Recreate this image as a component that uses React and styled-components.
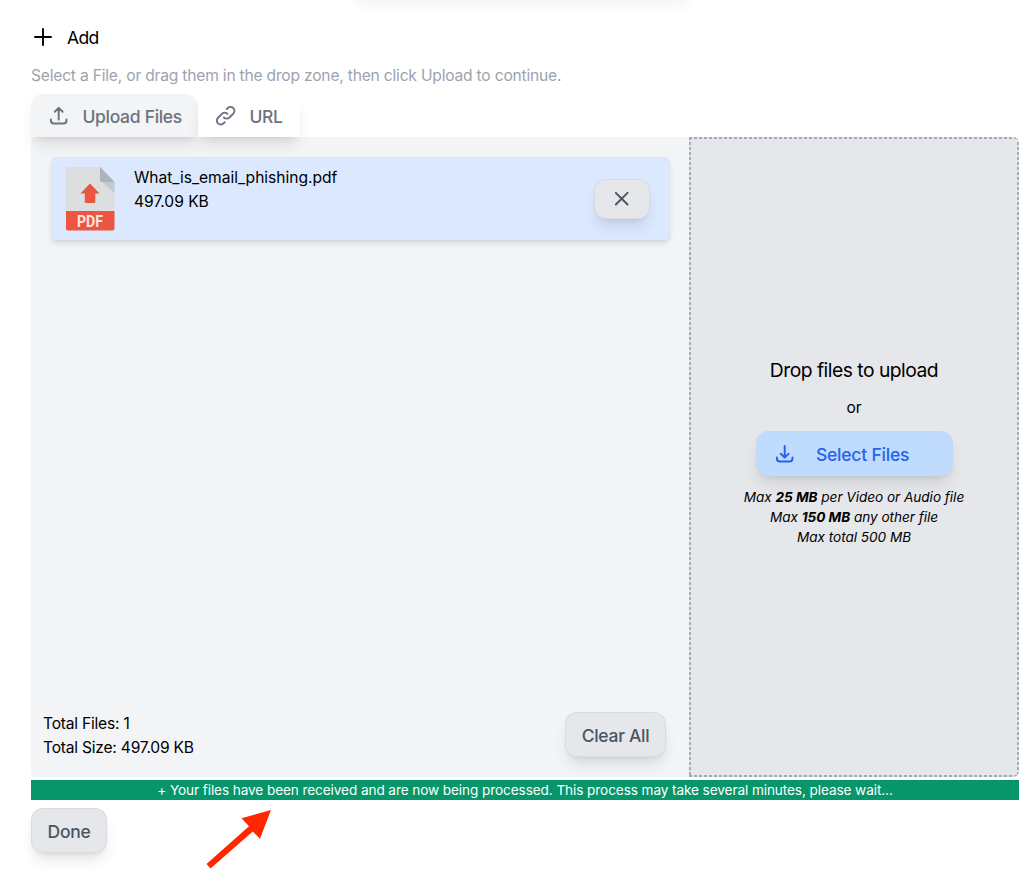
import React from "react";
import styled, { createGlobalStyle, css } from "styled-components";
import {
  HiOutlineUpload,
  HiOutlineDownload,
  HiOutlineLink,
  HiOutlineX,
  HiOutlinePlus,
} from "react-icons/hi";

const GlobalStyle = createGlobalStyle`
  * { box-sizing: border-box; }
  body {
    margin: 0;
    background: #fff;
    color: #000;
    font-family: Inter, "Liberation Sans", sans-serif;
    font-size: 15.6px;
    line-height: 24px;
    overflow: hidden;
  }
  h1, h2, p { margin: 0; font-weight: 400; }
  button { font-family: inherit; }
  svg path { stroke-width: inherit; }
`;

const softShadow = css`
  box-shadow: 0 10px 15px -3px rgba(0, 0, 0, 0.1), 0 4px 6px -4px rgba(0, 0, 0, 0.1);
`;

const Page = styled.main`
  position: relative;
  width: 1024px;
  height: 870px;
  padding: 24px 5px 0 31px;
  display: flex;
  flex-direction: column;
  overflow: hidden;
`;

const HeaderShade = styled.div`
  position: absolute;
  top: -30px;
  left: 357px;
  width: 332px;
  height: 28px;
  box-shadow: 0 5px 16px rgba(0, 0, 0, 0.06);
`;

const Heading = styled.header`
  display: flex;
  align-items: center;
  gap: 12px;
  height: 26px;
  svg { width: 24px; height: 24px; stroke-width: 1.9; }
`;

const Title = styled.h1`
  padding-top: 2px;
  font-size: 17.5px;
  letter-spacing: -0.6px;
`;

const Hint = styled.p`
  margin-top: 13.5px;
  height: 24px;
  color: #9ca3af;
  font-size: 15.6px;
  letter-spacing: -0.2px;
`;

const Tabs = styled.nav`
  display: flex;
  margin-top: 6.5px;
  height: 43px;
  position: relative;
`;

const Tab = styled.button`
  display: flex;
  align-items: center;
  width: ${(p) => p.$width}px;
  padding: 1px 0 0 16px;
  gap: 12px;
  border: 0;
  border-radius: 12px 12px 0 0;
  background: ${(p) => (p.$active ? "#f3f4f6" : "#fff")};
  color: #6b7280;
  font-size: 17.5px;
  font-weight: 500;
  letter-spacing: -0.3px;
  white-space: nowrap;
  ${softShadow}
  svg { width: 23.4px; height: 23.4px; flex: none; stroke-width: 2; }
`;

const Panel = styled.section`
  display: flex;
  height: 640px;
`;

const FilesPane = styled.div`
  flex: 1;
  display: flex;
  flex-direction: column;
  justify-content: space-between;
  padding: 20px 19px 18px 20px;
  border-radius: 5px 0 0 5px;
  background: #f3f4f6;
`;

const FileCard = styled.article`
  display: flex;
  align-items: flex-start;
  height: 83px;
  padding: 8px 20px 0 11px;
  border-radius: 5px;
  background: #dbe8fe;
  box-shadow: 0 4px 6px -1px rgba(0, 0, 0, 0.1), 0 2px 4px -2px rgba(0, 0, 0, 0.1);
`;

const PdfIcon = styled.svg`
  width: 56px;
  height: 68px;
  flex: none;
`;

const FileInfo = styled.div`
  flex: 1;
  margin: 1px 0 0 16px;
  letter-spacing: -0.02px;
`;

const Button = styled.button`
  display: flex;
  align-items: center;
  justify-content: center;
  width: ${(p) => p.$width}px;
  height: ${(p) => p.$height || 45}px;
  padding: 1px 0 0;
  border: 1px solid rgba(209, 213, 219, 0.65);
  border-radius: 12px;
  background: #e5e7eb;
  color: #4b5563;
  font-size: 17.5px;
  font-weight: 500;
  letter-spacing: -0.3px;
  ${softShadow}
  svg { width: 23.4px; height: 23.4px; stroke-width: 2; }
`;

const RemoveButton = styled(Button)`
  margin-top: 14px;
  padding: 0 1px 0 0;
`;

const SelectButton = styled(Button)`
  justify-content: flex-start;
  margin: 11px 0;
  padding-left: 16px;
  gap: 20px;
  background: #bfdbfe;
  border-color: #c8d8ee;
  color: #2563eb;
  letter-spacing: -0.2px;
`;

const Summary = styled.footer`
  display: flex;
  justify-content: space-between;
  align-items: flex-start;
  margin: 0 -15px 0 -8px;
  padding-right: 19px;
  height: 47px;
`;

const Totals = styled.div`
  letter-spacing: -0.22px;
`;

const dash = "#a2aab6 0 3px, transparent 3px 5px";

const DropZone = styled.div`
  width: 330px;
  display: flex;
  flex-direction: column;
  align-items: center;
  padding-top: 219px;
  border-radius: 0 6px 6px 0;
  background:
    repeating-linear-gradient(90deg, ${dash}) 0 0 / 100% 2px no-repeat,
    repeating-linear-gradient(90deg, ${dash}) 0 100% / 100% 2px no-repeat,
    repeating-linear-gradient(180deg, ${dash}) 0 0 / 2px 100% no-repeat,
    repeating-linear-gradient(180deg, ${dash}) 100% 0 / 2px 100% no-repeat,
    #e5e7eb;
`;

const DropTitle = styled.h2`
  font-size: 19.3px;
  line-height: 28px;
  letter-spacing: -0.5px;
`;

const Or = styled.p`
  margin-top: 12px;
`;

const Limits = styled.div`
  font-size: 13.6px;
  line-height: 20px;
  font-style: italic;
  text-align: center;
  letter-spacing: -0.03px;
`;

const StatusBar = styled.div`
  margin-top: 3px;
  height: 20px;
  flex: none;
  background: #069669;
  color: #fff;
  font-size: 13.6px;
  line-height: 20px;
  text-align: center;
  letter-spacing: -0.09px;
`;

const Actions = styled.div`
  padding-top: 8px;
`;

const Pointer = styled.svg`
  position: absolute;
  left: 200px;
  top: 804px;
  width: 80px;
  height: 66px;
`;

function PdfFile() {
  return (
    <PdfIcon viewBox="0 0 56 68">
      <path d="M6 2h32l14.5 15v32H4V4q0-2 2-2z" fill="#dcdee0" />
      <path d="M38 2l14.5 15v11L38 15z" fill="#c3c9cf" />
      <path d="M38 2l14.5 15H40q-2 0-2-2z" fill="#abb4ba" />
      <path d="M28 18.5l9.5 10h-4.2V37q0 1-1 1h-8.5q-1 0-1-1v-8.5h-4.3z" fill="#eb5541" />
      <path d="M4 46h48.5v17.5q0 2-2 2H6q-2 0-2-2z" fill="#eb5541" />
      <text
        x="28"
        y="61.5"
        textAnchor="middle"
        fontFamily="Roboto, sans-serif"
        fontWeight="700"
        fontSize="15.6"
        textLength="26"
        lengthAdjust="spacingAndGlyphs"
        fill="#fbe3df"
      >
        PDF
      </text>
    </PdfIcon>
  );
}

export default function App() {
  return (
    <>
      <GlobalStyle />
      <Page>
        <HeaderShade />
        <Heading>
          <HiOutlinePlus />
          <Title>Add</Title>
        </Heading>
        <Hint>Select a File, or drag them in the drop zone, then click Upload to continue.</Hint>
        <Tabs>
          <Tab $active $width={167}>
            <HiOutlineUpload />
            Upload Files
          </Tab>
          <Tab $width={101.5}>
            <HiOutlineLink />
            URL
          </Tab>
        </Tabs>
        <Panel>
          <FilesPane>
            <FileCard>
              <PdfFile />
              <FileInfo>
                <p>What_is_email_phishing.pdf</p>
                <p>497.09 KB</p>
              </FileInfo>
              <RemoveButton $width={56} $height={40} aria-label="Remove file">
                <HiOutlineX />
              </RemoveButton>
            </FileCard>
            <Summary>
              <Totals>
                <p>Total Files: 1</p>
                <p>Total Size: 497.09 KB</p>
              </Totals>
              <Button $width={101}>Clear All</Button>
            </Summary>
          </FilesPane>
          <DropZone>
            <DropTitle>Drop files to upload</DropTitle>
            <Or>or</Or>
            <SelectButton $width={197}>
              <HiOutlineDownload />
              Select Files
            </SelectButton>
            <Limits>
              <p>Max <b>25 MB</b> per Video or Audio file</p>
              <p>Max <b>150 MB</b> any other file</p>
              <p>Max total 500 MB</p>
            </Limits>
          </DropZone>
        </Panel>
        <StatusBar>
          + Your files have been received and are now being processed. This process may take several minutes, please wait...
        </StatusBar>
        <Actions>
          <Button $width={76}>Done</Button>
        </Actions>
        <Pointer viewBox="0 0 80 66">
          <path d="M71 6L60 34.7l-7.2-7.2L10.5 64.5l-4-4.5L49 22.2l-7.5-8z" fill="#ff2600" />
        </Pointer>
      </Page>
    </>
  );
}
